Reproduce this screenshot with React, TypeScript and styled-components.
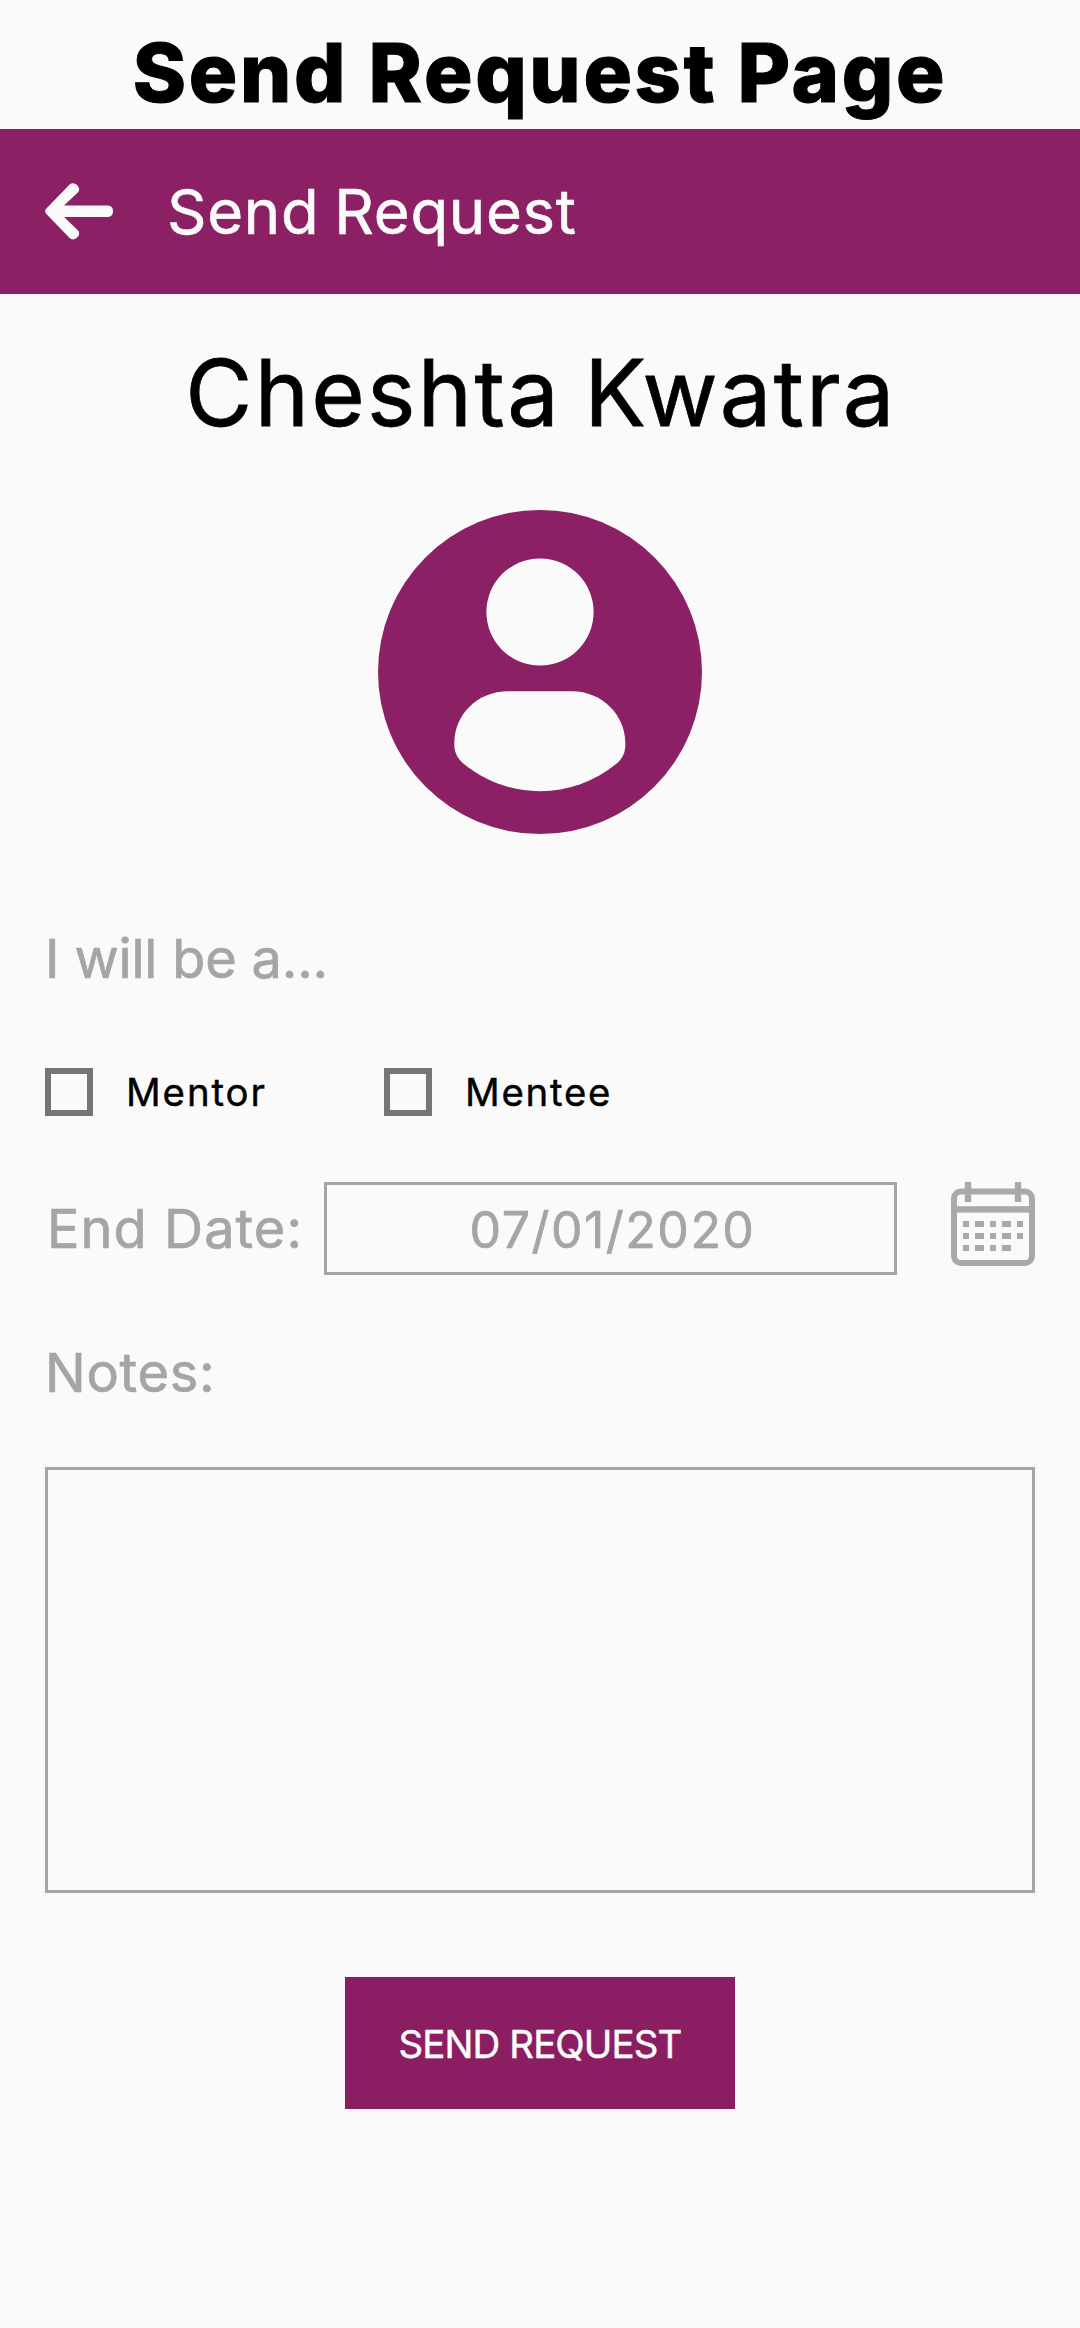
import React from "react";
import styled, { createGlobalStyle } from "styled-components";

const plum = "#8b2064";
const plumButton = "#8b1d62";
const paper = "#fafafa";
const muted = "#a5a5a5";

const GlobalStyle = createGlobalStyle`
  body {
    margin: 0;
    background: ${paper};
    font-family: Inter, "Liberation Sans", sans-serif;
  }
  *, *::before, *::after {
    box-sizing: border-box;
  }
`;

const Screen = styled.main`
  display: flex;
  flex-direction: column;
  width: 1080px;
  height: 2328px;
  background: ${paper};
  color: #000;
  white-space: nowrap;
`;

const PageTitle = styled.h1`
  display: flex;
  align-items: center;
  justify-content: center;
  height: 129px;
  margin: 0;
  padding: 16px 0 0;
  font-size: 80.8px;
  font-weight: 800;
  line-height: 100px;
  letter-spacing: 2.7px;
  -webkit-text-stroke: 1px currentColor;
`;

const AppBar = styled.header`
  display: flex;
  align-items: center;
  gap: 54px;
  height: 165px;
  padding-left: 45px;
  background: ${plum};
  color: ${paper};
`;

const IconButton = styled.button`
  display: flex;
  padding: 0;
  border: 0;
  background: none;
  color: inherit;
`;

const BarTitle = styled.h2`
  margin: 0;
  font-size: 61.6px;
  font-weight: 400;
  line-height: 80px;
  letter-spacing: 0.7px;
  word-spacing: -3px;
  -webkit-text-stroke: 0.6px currentColor;
`;

const Profile = styled.section`
  display: flex;
  flex-direction: column;
  align-items: center;
  gap: 57px;
  padding-top: 38px;
`;

const Name = styled.h3`
  margin: 0;
  padding-left: 2px;
  font-size: 91.8px;
  font-weight: 400;
  line-height: 121px;
  letter-spacing: 2.3px;
  word-spacing: -5px;
  -webkit-text-stroke: 0.8px currentColor;
`;

const Form = styled.form`
  display: flex;
  flex-direction: column;
  padding: 85px 45px 0;
`;

const Label = styled.label<{ $spacing: number }>`
  color: ${muted};
  font-size: 54.1px;
  line-height: 80px;
  letter-spacing: ${(p) => p.$spacing}px;
  -webkit-text-stroke: 0.7px currentColor;
`;

const Options = styled.div`
  display: grid;
  grid-template-columns: 339px 339px;
  margin-top: 69px;
`;

const Option = styled.label<{ $spacing: number }>`
  display: flex;
  align-items: center;
  gap: 33px;
  font-size: 38.4px;
  line-height: 48px;
  letter-spacing: ${(p) => p.$spacing}px;
  -webkit-text-stroke: 0.4px currentColor;
`;

const Checkbox = styled.input`
  appearance: none;
  width: 48px;
  height: 48px;
  margin: 0;
  border: 6px solid #757575;
`;

const DateField = styled.div`
  display: grid;
  grid-template-columns: 279px 573px 138px;
  align-items: center;
  height: 93px;
  margin-top: 66px;
`;

const DateLabel = styled(Label)`
  padding-left: 2px;
`;

const DateInput = styled.input`
  width: 573px;
  height: 93px;
  margin: 0;
  padding: 3px 0 0 4px;
  border: 3px solid ${muted};
  background: transparent;
  color: ${muted};
  font: 400 50px Inter, "Liberation Sans", sans-serif;
  letter-spacing: 1.5px;
  text-align: center;
  -webkit-text-stroke: 0.7px currentColor;
`;

const CalendarButton = styled(IconButton)`
  align-self: start;
  justify-self: end;
  color: #a9a9a9;
`;

const NotesLabel = styled(Label)`
  margin-top: 58px;
`;

const Notes = styled.textarea`
  width: 990px;
  height: 426px;
  margin: 54px 0 0;
  padding: 20px;
  border: 3px solid ${muted};
  background: transparent;
  font: 400 40px Inter, "Liberation Sans", sans-serif;
  resize: none;
`;

const Submit = styled.button`
  align-self: center;
  width: 390px;
  height: 132px;
  margin-top: 84px;
  padding: 2px 0 0;
  border: 0;
  background: ${plumButton};
  color: ${paper};
  font: 400 38.4px Inter, "Liberation Sans", sans-serif;
  letter-spacing: -0.87px;
  white-space: nowrap;
  -webkit-text-stroke: 0.5px currentColor;
`;

const ArrowIcon = () => (
  <svg width="68" height="57" viewBox="0 0 68 57" fill="currentColor" aria-hidden="true">
    <path d="M1.4 25.6 L24.6 1.5 Q28.2 -1.2 31.8 1.8 Q36 6 32.8 9.6 L19 22.6 H63 Q68 23 68 28.3 Q68 33.6 63 34 H19 L32.8 47.2 Q36 50.8 31.8 54.8 Q28.2 58 24.6 55.1 L1.4 31 Q-1.2 28.3 1.4 25.6 Z" />
  </svg>
);

const AvatarIcon = () => (
  <svg width="324" height="324" viewBox="0 0 324 324" aria-hidden="true">
    <circle cx="162" cy="162" r="162" fill={plum} />
    <circle cx="162" cy="102" r="53.6" fill={paper} />
    <path
      fill={paper}
      d="M130 181.2 H194 C224 181.2 247.3 205 247.3 233 V237 Q246.5 247 239 253.3 C194 290.5 130 290.5 85 253.3 Q77 246 76.3 237 V233 C76.3 205 99 181.2 130 181.2 Z"
    />
  </svg>
);

const dayRows = [
  [0, 1, 2, 3, 4],
  [0, 1, 2, 3, 4],
  [0, 1, 2, 3],
];
const dayX = [12, 24, 39, 51, 66];
const dayWidth = [6, 9, 6, 9, 6];

const CalendarIcon = () => (
  <svg width="84" height="84" viewBox="0 0 84 84" fill="currentColor" aria-hidden="true">
    <rect x="3" y="9.5" width="78" height="71.5" rx="7" fill="none" stroke="currentColor" strokeWidth="6" />
    <rect x="3" y="24.2" width="78" height="6.4" />
    <rect x="13.8" y="0" width="6.4" height="20" />
    <rect x="63.8" y="0" width="6.4" height="20" />
    {dayRows.map((row, r) =>
      row.map((d) => (
        <rect key={`${r}-${d}`} x={dayX[d]} y={39 + r * 12} width={dayWidth[d]} height="6" />
      ))
    )}
  </svg>
);

export default function App() {
  return (
    <>
      <GlobalStyle />
      <Screen>
        <PageTitle>Send Request Page</PageTitle>
        <AppBar>
          <IconButton type="button" aria-label="Back">
            <ArrowIcon />
          </IconButton>
          <BarTitle>Send Request</BarTitle>
        </AppBar>
        <Profile>
          <Name>Cheshta Kwatra</Name>
          <AvatarIcon />
        </Profile>
        <Form onSubmit={(e) => e.preventDefault()}>
          <Label as="div" $spacing={-0.18}>I will be a...</Label>
          <Options>
            <Option $spacing={1.91}>
              <Checkbox type="checkbox" />
              Mentor
            </Option>
            <Option $spacing={1.74}>
              <Checkbox type="checkbox" />
              Mentee
            </Option>
          </Options>
          <DateField>
            <DateLabel htmlFor="end-date" $spacing={1.06}>End Date:</DateLabel>
            <DateInput id="end-date" defaultValue="07/01/2020" />
            <CalendarButton type="button" aria-label="Pick a date">
              <CalendarIcon />
            </CalendarButton>
          </DateField>
          <NotesLabel htmlFor="notes" $spacing={0.71}>Notes:</NotesLabel>
          <Notes id="notes" />
          <Submit type="submit">SEND REQUEST</Submit>
        </Form>
      </Screen>
    </>
  );
}
